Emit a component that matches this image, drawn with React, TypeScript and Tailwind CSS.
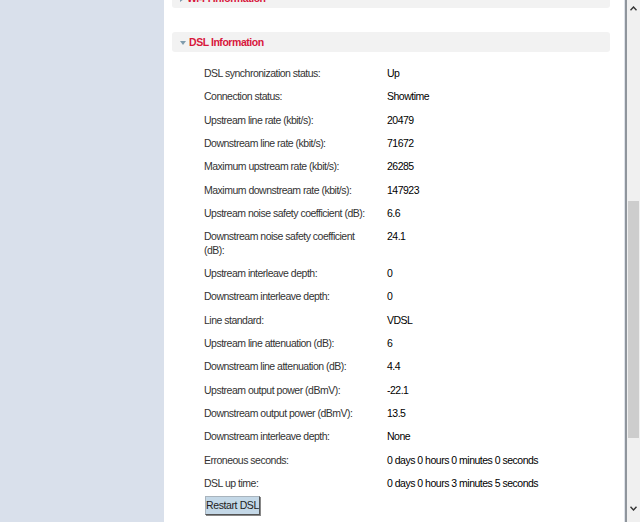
import React from "react";

const rows: [string, string][] = [
  ["DSL synchronization status:", "Up"],
  ["Connection status:", "Showtime"],
  ["Upstream line rate (kbit/s):", "20479"],
  ["Downstream line rate (kbit/s):", "71672"],
  ["Maximum upstream rate (kbit/s):", "26285"],
  ["Maximum downstream rate (kbit/s):", "147923"],
  ["Upstream noise safety coefficient (dB):", "6.6"],
  ["Downstream noise safety coefficient (dB):", "24.1"],
  ["Upstream interleave depth:", "0"],
  ["Downstream interleave depth:", "0"],
  ["Line standard:", "VDSL"],
  ["Upstream line attenuation (dB):", "6"],
  ["Downstream line attenuation (dB):", "4.4"],
  ["Upstream output power (dBmV):", "-22.1"],
  ["Downstream output power (dBmV):", "13.5"],
  ["Downstream interleave depth:", "None"],
  ["Erroneous seconds:", "0 days 0 hours 0 minutes 0 seconds"],
  ["DSL up time:", "0 days 0 hours 3 minutes 5 seconds"],
];

function SectionBar({ title, open }: { title: string; open: boolean }) {
  return (
    <div className="flex items-center h-5 bg-[#f2f2f2] rounded-[3px] pl-[8px] pt-[1px]">
      {open ? (
        <span className="w-0 h-0 border-l-[3.5px] border-r-[3.5px] border-t-[4px] border-l-transparent border-r-transparent border-t-[#7f9cad] mr-[3px]" />
      ) : (
        <span className="w-0 h-0 border-t-[3.5px] border-b-[3.5px] border-l-[4px] border-t-transparent border-b-transparent border-l-[#7f9cad] mr-[3px]" />
      )}
      <span className="text-[10.5px] tracking-[-0.45px] font-bold text-[#d8173c]">{title}</span>
    </div>
  );
}

export default function App() {
  return (
    <div
      className="flex w-[640px] h-[522px] overflow-hidden bg-white text-[#333]"
      style={{ fontFamily: '"Liberation Sans", Arial, sans-serif' }}
    >
      {/* Sidebar */}
      <div className="w-[164px] shrink-0 bg-[#d9e0eb]" />

      {/* Main */}
      <div className="w-[460px] shrink-0 pl-[8px] pr-[14px] overflow-hidden">
        <div className="-mt-[12px]">
          <SectionBar title="Wi-Fi Information" open={false} />
        </div>
        <div className="mt-[24px]">
          <SectionBar title="DSL Information" open={true} />
        </div>

        <table className="mt-[10px] ml-[32px] text-[10.5px] tracking-[-0.5px] border-collapse">
          <tbody>
            {rows.map(([label, value], i) => (
              <tr key={i}>
                <td className="w-[183px] pr-[10px] py-[5px] leading-[13.33px] align-top text-[#333]">{label}</td>
                <td className="py-[5px] leading-[13.33px] align-top text-black">{value}</td>
              </tr>
            ))}
          </tbody>
        </table>

        <button className="block ml-[33px] mt-[1px] h-[19px] w-[55px] text-[10.5px] tracking-[-0.4px] text-[#222] bg-[#c4d8e7] border border-[#a9b4bd] border-r-[#555] border-b-[#555] shadow-[1px_1px_0_#888]">
          Restart DSL
        </button>
      </div>

      {/* Window edge + scrollbar */}
      <div className="w-[3px] shrink-0 bg-[#dfe3ea] border-r-2 border-[#8f959c]" />
      <div className="w-[13px] shrink-0 bg-[#f0f0f0] flex flex-col items-center">
        <div className="h-[17px] flex items-center justify-center">
          <svg width="7" height="5" viewBox="0 0 7 5">
            <path d="M0.5 4.2 L3.5 1 L6.5 4.2" fill="none" stroke="#333" strokeWidth="1.4" />
          </svg>
        </div>
        <div className="mt-[184px] w-[11px] h-[237px] bg-[#cdcdcd]" />
        <div className="flex-1" />
        <div className="h-[17px] flex items-center justify-center mb-[5px]">
          <svg width="7" height="5" viewBox="0 0 7 5">
            <path d="M0.5 0.8 L3.5 4 L6.5 0.8" fill="none" stroke="#333" strokeWidth="1.4" />
          </svg>
        </div>
      </div>
    </div>
  );
}
